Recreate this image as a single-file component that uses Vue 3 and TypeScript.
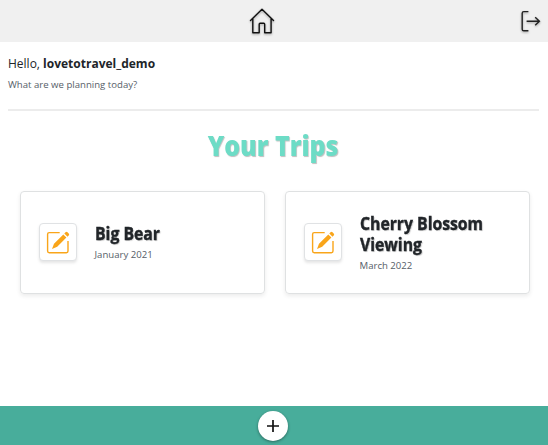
<script setup lang="ts">
interface Trip {
  id: number
  name: string
  date: string
}

const username = 'lovetotravel_demo'
const trips: Trip[] = [
  { id: 1, name: 'Big Bear', date: 'January 2021' },
  { id: 2, name: 'Cherry Blossom Viewing', date: 'March 2022' },
]
</script>

<template>
  <div class="page">
    <header class="topbar">
      <span class="spacer"></span>
      <a class="home" aria-label="Home">
        <svg width="26" height="28" viewBox="0 0 26 28" fill="none" stroke="#111" stroke-width="1.4">
          <path d="M1.5 13.6 13 2.3l11.5 11.3M3.8 11.8v14h6.4v-8.6q0-.9.9-.9h3.7q.9 0 .9.9v8.6h6.4v-14" stroke-linejoin="round" stroke-linecap="round" />
        </svg>
      </a>
      <a class="logout" aria-label="Log out">
        <svg width="22" height="24" viewBox="0 0 22 24" fill="none" stroke="#222" stroke-width="1.4">
          <path d="M8.4 2.6H3.8q-1.6 0-1.6 1.6v16q0 1.6 1.6 1.6h4.6" />
          <path d="M6.6 12.2h12.8M15.2 8.2l4.2 4-4.2 4" />
        </svg>
      </a>
    </header>

    <main>
      <section class="greeting">
        <p class="hello">Hello, <strong>{{ username }}</strong></p>
        <p class="question">What are we planning today?</p>
      </section>
      <h1><span>Your Trips</span></h1>
      <section class="trips">
        <article v-for="trip in trips" :key="trip.id" class="card">
          <button class="edit" aria-label="Edit trip">
            <svg width="24" height="24" viewBox="0 0 24 24">
              <path d="M13.7 2.6H3.2Q1.6 2.6 1.6 4.2v16.9q0 1.6 1.6 1.6h17.2q1.6 0 1.6-1.6V11" fill="none" stroke="#f9a51a" stroke-width="1.4" />
              <path d="m6 19 2-5.2L17.3 4.5l3.1 3.1-9.2 9.2ZM18.3 3.5l1.2-1.2q1-1 2 0l1.2 1.2q1 1 0 2l-1.2 1.2Z" fill="#f9a51a" />
            </svg>
          </button>
          <div class="info">
            <h2>{{ trip.name }}</h2>
            <p>{{ trip.date }}</p>
          </div>
        </article>
      </section>
    </main>

    <footer class="bottombar">
      <button class="add" aria-label="Add trip">
        <svg width="14" height="14" viewBox="0 0 14 14" stroke="#111" stroke-width="1.7">
          <path d="M7 1v12M1 7h12" />
        </svg>
      </button>
    </footer>
  </div>
</template>

<style>
body {
  background: #fff;
}
</style>

<style scoped>
.page {
  display: flex;
  flex-direction: column;
  height: 445px;
  overflow: hidden;
  font-family: "Open Sans", "Noto Sans", sans-serif;
  color: #212529;
}
p, h1, h2 {
  margin: 0;
}
button {
  border: 0;
  padding: 0;
}
svg {
  display: block;
}
.topbar {
  display: grid;
  grid-template-columns: 1fr auto 1fr;
  align-items: center;
  height: 42px;
  box-sizing: border-box;
  padding: 0 6px 0 0;
  background: #f0f0f0;
}
.home {
  margin-right: 18px;
}
.logout {
  justify-self: end;
}
.topbar svg {
  filter: drop-shadow(0 1px 1px rgba(0, 0, 0, 0.35));
}
main {
  flex: 1;
}
.greeting {
  height: 67px;
  margin: 0 9px 0 8px;
  border-bottom: 2px solid #ececec;
}
.hello {
  padding-top: 12px;
  font-size: 12px;
  line-height: 20px;
}
.question {
  padding-top: 2px;
  font-size: 9.6px;
  line-height: 18px;
  color: #565e68;
}
h1 {
  padding-top: 15px;
  height: 65px;
  text-align: center;
  font-size: 29px;
  line-height: 38px;
  font-weight: 800;
  color: #6ddcc6;
  text-shadow: 1px 1px 1px rgba(0, 0, 0, 0.25);
}
h1 span {
  display: inline-block;
  margin-right: 1px;
  transform: scaleX(0.86);
}
.trips {
  display: grid;
  grid-template-columns: 1fr 1fr;
  gap: 20px;
  padding: 0 18px 0 20px;
}
.card {
  display: flex;
  align-items: center;
  gap: 18px;
  box-sizing: border-box;
  height: 103px;
  padding-left: 18px;
  border: 1px solid #dfe1e2;
  border-radius: 4px;
  box-shadow: 0 2px 4px rgba(0, 0, 0, 0.08);
}
.edit {
  display: grid;
  place-items: center;
  flex: none;
  width: 38px;
  height: 38px;
  margin-bottom: 1px;
  border: 1px solid #e0e2e4;
  border-radius: 4px;
  background: #fff;
  box-shadow: 0 2px 3px rgba(0, 0, 0, 0.1);
}
.edit svg {
  margin-top: -1px;
}
h2 {
  width: 155px;
  font-size: 17.5px;
  line-height: 21px;
  font-weight: 700;
  -webkit-text-stroke: 0.4px #212529;
  text-shadow: 1px 1px 1px rgba(0, 0, 0, 0.2);
  transform: scaleX(0.9);
  transform-origin: left;
}
.info {
  width: 155px;
  padding-top: 2px;
}
.info p {
  position: relative;
  top: 1px;
  left: -0.5px;
  font-size: 9.6px;
  line-height: 20px;
  color: #565e68;
}
.bottombar {
  display: flex;
  justify-content: center;
  align-items: center;
  height: 39px;
  background: #48ad9b;
}
.add {
  display: grid;
  place-items: center;
  width: 30px;
  height: 30px;
  margin-right: 2px;
  border-radius: 50%;
  background: #fff;
  box-shadow: 0 1px 3px rgba(0, 0, 0, 0.4);
}
</style>
